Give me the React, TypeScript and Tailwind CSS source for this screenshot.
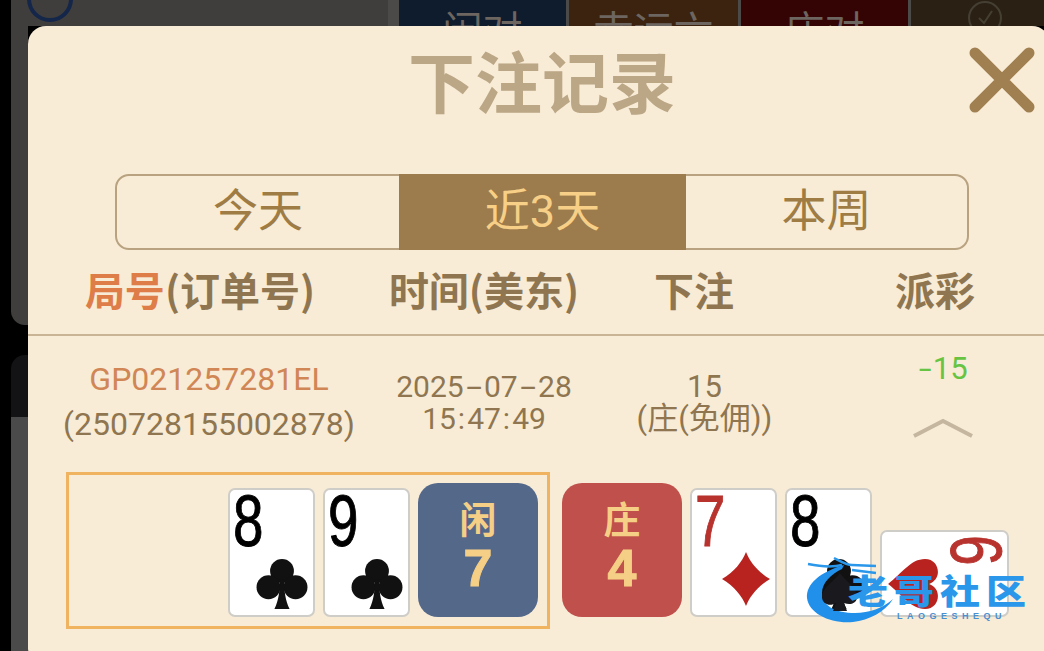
import React from "react";

type Suit = "club" | "diamond" | "heart";

const SuitIcon: React.FC<{ suit: Suit; className: string }> = ({ suit, className }) => {
  if (suit === "club") {
    return (
      <svg viewBox="0 0 48 48" className={className}>
        <circle cx="24" cy="12" r="11" fill="#111" />
        <circle cx="11.5" cy="27" r="11" fill="#111" />
        <circle cx="36.5" cy="27" r="11" fill="#111" />
        <path d="M22 20h4c0 10 1 19 5 27H17c4-8 5-17 5-27z" fill="#111" />
      </svg>
    );
  }
  if (suit === "diamond") {
    return (
      <svg viewBox="0 0 48 54" className={className}>
        <path d="M24 0C28 10 36 20 48 27 36 34 28 44 24 54 20 44 12 34 0 27 12 20 20 10 24 0z" fill="#b8231f" />
      </svg>
    );
  }
  return (
    <svg viewBox="0 0 48 48" className={className}>
      <path d="M24 47C14 34 1 26 1 13 1 5 7 1 13 1c5 0 9 3 11 8 2-5 6-8 11-8 6 0 12 4 12 12 0 13-13 21-23 34z" fill="#b8231f" />
    </svg>
  );
};

const Card: React.FC<{ rank: string; suit: Suit; red?: boolean; className?: string }> = ({ rank, suit, red, className }) => (
  <div className={`relative h-[129px] w-[87px] shrink-0 rounded-[7px] border-2 border-[#cfcdc8] bg-white ${className ?? ""}`}>
    <span
      className={`absolute left-[3px] top-[-9px] origin-left scale-x-[0.76] font-['Liberation_Sans',sans-serif] text-[72px] leading-[80px] [-webkit-text-stroke:1px_currentColor] ${
        red ? "text-[#b8322e]" : "text-black"
      }`}
    >
      {rank}
    </span>
    <SuitIcon
      suit={suit}
      className={suit === "diamond" ? "absolute bottom-[9px] right-[5px] h-[54px] w-[48px]" : "absolute bottom-[5px] right-[5px] h-[52px] w-[52px]"}
    />
  </div>
);

const ScoreTile: React.FC<{ label: string; score: number; bg: string }> = ({ label, score, bg }) => (
  <div className={`flex h-[134px] w-[120px] shrink-0 flex-col items-center rounded-[20px] pt-[18px] ${bg}`}>
    <span className="text-[37px] leading-[42px] font-bold text-[#f5cf85]">{label}</span>
    <span className="font-['Liberation_Sans',sans-serif] text-[52px] leading-[50px] font-bold text-[#f5cf85] [-webkit-text-stroke:1px_currentColor]">{score}</span>
  </div>
);

const BackTile: React.FC<{ label: string; bg: string; width: string }> = ({ label, bg, width }) => (
  <div className={`flex h-full items-start justify-center pt-[9px] text-[40px] leading-[46px] text-[#6d6660] ${bg} ${width}`}>
    {label}
  </div>
);

// hyphens and colons in the record row sit wider than the font draws them
const Gap: React.FC<{ char: string; className: string }> = ({ char, className }) => <span className={`inline-block ${className}`}>{char}</span>;

const Watermark: React.FC = () => (
  <div className="absolute left-[806px] top-[556px] flex h-[70px] w-[226px] items-start">
    <svg viewBox="0 0 90 70" className="h-[70px] w-[90px] shrink-0">
      {/* dragon whiskers */}
      <path d="M2 8c10 2 22 4 34 1" fill="none" stroke="#2a97ea" strokeWidth="2.5" />
      <path d="M28 2c6 3 12 7 18 7l24 1M46 14l24 3" fill="none" stroke="#2a97ea" strokeWidth="2.5" />
      {/* crescent */}
      <path d="M38 9C14 16 0 28 1 42c2 16 24 26 46 24 16-2 32-10 40-23-10 9-24 14-38 14C30 57 16 50 16 37c0-10 9-19 20-24z" fill="#2190ea" />
      {/* spade */}
      <path d="M34 17c-5 8-18 14-18 24 0 7 8 10 14 6l-3 8h14l-3-8c8 3 13-1 13-6 0-10-12-16-17-24z" fill="#1a1a1e" />
    </svg>
    <div className="ml-[-48px] flex flex-col items-start">
      <div className="mt-[20px] origin-top scale-y-[0.85] text-[40px] leading-[40px] font-black tracking-[6px] whitespace-nowrap text-[#2a97ea]">老哥社区</div>
      <div className="ml-[49px] mt-[-4px] font-['Liberation_Sans',sans-serif] text-[9px] leading-[9px] font-bold tracking-[4.5px] whitespace-nowrap text-[#4a8fd0]">LAOGESHEQU</div>
    </div>
  </div>
);

const App: React.FC = () => {
  return (
    <div className="relative h-[651px] w-[1044px] overflow-hidden bg-black font-['Roboto','Noto_Sans_CJK_SC',sans-serif]">
      {/* game table behind the dialog */}
      <div className="flex h-[26px] pl-[11px]">
        <div className="h-full w-[377px] bg-[#3f3e3c] pl-[16px]">
          <div className="mt-[-24px] h-[46px] w-[46px] rounded-full border-[4px] border-[#14264a]" />
        </div>
        <div className="flex h-full flex-1 gap-[3px] overflow-hidden bg-[#4b4a48] pl-[11px]">
          <BackTile label="闲对" bg="bg-[#0e1c2e]" width="w-[167px]" />
          <BackTile label="幸运六" bg="bg-[#3b2310]" width="w-[169px]" />
          <BackTile label="庄对" bg="bg-[#340405]" width="w-[167px]" />
          <div className="flex flex-1 justify-center bg-[#2a2114] pl-[14px]">
            <svg viewBox="0 0 36 36" className="h-[36px] w-[36px] shrink-0">
              <circle cx="18" cy="18" r="16" fill="none" stroke="#453f33" strokeWidth="2" />
              <path d="M12 18l5 5 8-12" fill="none" stroke="#453f33" strokeWidth="2" />
            </svg>
          </div>
        </div>
      </div>
      <div className="ml-[11px] h-[299px] w-[17px] rounded-bl-[14px] bg-[#3f3e3c]" />
      <div className="ml-[11px] mt-[30px] h-[62px] w-[17px] rounded-tl-[14px] bg-[#131316]" />
      <div className="ml-[11px] h-[234px] w-[17px] bg-[#4a4a4a]" />

      {/* bet history dialog */}
      <div className="absolute left-[28px] top-[26px] h-[640px] w-[1022px] rounded-[18px] bg-[#f8ecd7]">
        <div className="relative flex h-[112px] justify-center pl-[6px] pt-[21px]">
          <h1 className="text-[67px] leading-[76px] font-bold text-[#bba686]">下注记录</h1>
          <svg viewBox="0 0 66 66" className="absolute left-[941px] top-[21px] h-[66px] w-[66px]">
            <path d="M6 6l54 54M60 6L6 60" stroke="#a07f50" strokeWidth="11" strokeLinecap="round" />
          </svg>
        </div>

        {/* range tabs */}
        <div className="ml-[87px] mt-[36px] flex h-[76px] w-[854px] rounded-[14px] border-2 border-[#b8a27f] text-[45px]">
          <div className="flex w-[282px] items-center justify-center text-[#a07c45]">今天</div>
          <div className="-my-[2px] flex w-[287px] items-center justify-center bg-[#9c7b4c] text-[#f7cf86]">近3天</div>
          <div className="flex flex-1 items-center justify-center text-[#a07c45]">本周</div>
        </div>

        {/* table head */}
        <div className="mt-[16px] flex h-[70px] border-b-2 border-[#c9b595] font-['Noto_Sans_CJK_SC',sans-serif] text-[40px] leading-[46px] font-bold whitespace-nowrap text-[#8f7650]">
          <div className="w-[344px] shrink-0 text-center">
            <span className="text-[#de7d47]">局号</span>(订单号)
          </div>
          <div className="w-[224px] shrink-0 text-center">时间(美东)</div>
          <div className="w-[196px] shrink-0 text-center">下注</div>
          <div className="w-[286px] shrink-0 text-center">派彩</div>
        </div>

        {/* record row */}
        <div className="flex h-[136px] whitespace-nowrap text-[#8f7650]">
          <div className="w-[362px] shrink-0 pt-[21px] text-center text-[32px] leading-[45px]">
            <div className="text-[#d18655]">GP021257281EL</div>
            <div>(250728155002878)</div>
          </div>
          <div className="w-[188px] shrink-0 pt-[35px] text-center text-[30px] leading-[32px]">
            <div>
              2025<Gap char="-" className="mx-[6px] scale-x-[1.9]" />07<Gap char="-" className="mx-[6px] scale-x-[1.9]" />28
            </div>
            <div>
              15<Gap char=":" className="mx-[2px]" />47<Gap char=":" className="mx-[2px]" />49
            </div>
          </div>
          <div className="w-[253px] shrink-0 pt-[35px] text-center text-[31px] leading-[32px]">
            <div>15</div>
            <div>(庄(免佣))</div>
          </div>
          <div className="w-[224px] shrink-0 pt-[15px] text-center text-[31px] leading-[36px]">
            <div className="text-[#67c443]">
              <Gap char="-" className="mx-[3px] scale-x-[1.5]" />15
            </div>
            <svg viewBox="0 0 62 20" className="mx-auto mt-[31px] h-[20px] w-[62px]">
              <path d="M2 18L31 3l29 15" fill="none" stroke="#c4b69f" strokeWidth="4" />
            </svg>
          </div>
        </div>

        {/* cards */}
        <div className="flex items-start pl-[38px]">
          <div className="flex h-[157px] w-[484px] items-end justify-end gap-[8px] border-[3px] border-[#f0b35f] pr-[9px] pb-[9px]">
            <Card rank="8" suit="club" />
            <Card rank="9" suit="club" />
            <ScoreTile label="闲" score={7} bg="bg-[#54688a]" />
          </div>
          <div className="ml-[12px] mt-[11px] flex items-end gap-[8px]">
            <ScoreTile label="庄" score={4} bg="bg-[#c0504b]" />
            <Card rank="7" suit="diamond" red />
            <Card rank="8" suit="club" />
            <div className="flex h-[87px] w-[129px] items-center justify-center">
              <Card rank="6" suit="heart" red className="rotate-90" />
            </div>
          </div>
        </div>
      </div>

      <Watermark />
    </div>
  );
};

export default App;
